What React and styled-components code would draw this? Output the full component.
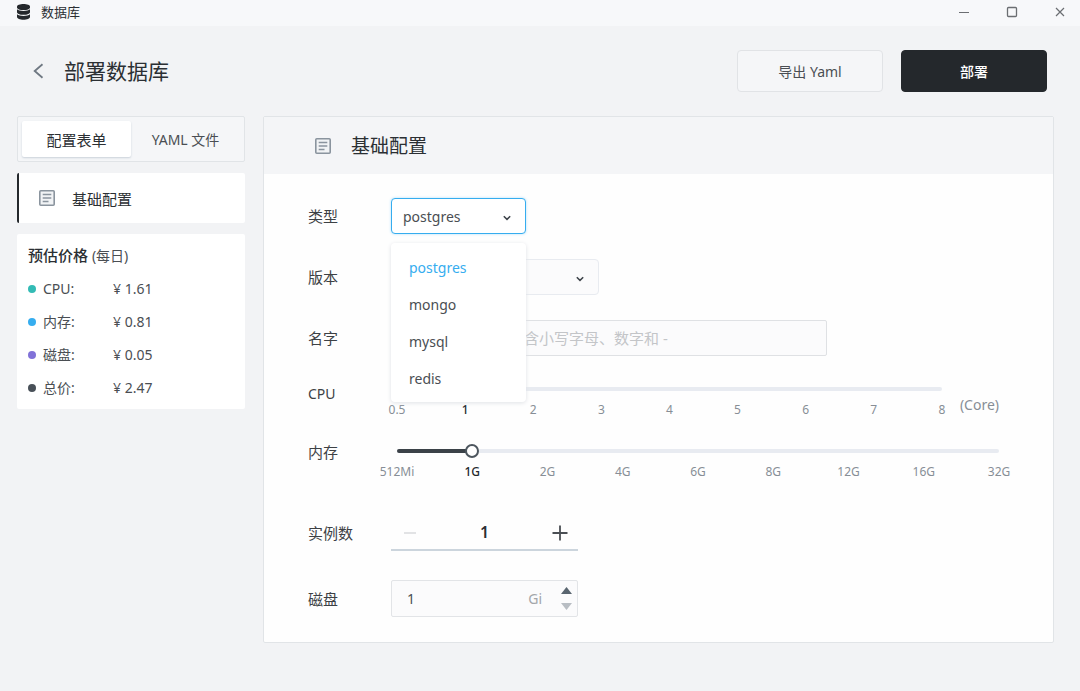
import React, { useState } from 'react';
import styled, { createGlobalStyle } from 'styled-components';

const GlobalStyle = createGlobalStyle`
  * {
    box-sizing: border-box;
  }

  body {
    margin: 0;
    background: #f2f3f5;
    color: #2b2f33;
    font-family: 'Noto Sans', 'Noto Sans CJK SC', sans-serif;
    font-size: 15px;
  }

  button, input, select {
    margin: 0;
    font: inherit;
    color: inherit;
  }

  button {
    cursor: pointer;
  }
`;

const TitleBar = styled.header`
  display: flex;
  align-items: center;
  justify-content: space-between;
  height: 26px;
  background: #f7f8fa;
`;

const AppName = styled.div`
  display: flex;
  align-items: center;
  gap: 10px;
  padding: 0 0 2px 16px;
  font-size: 13px;
  line-height: 24px;
`;

const WindowButtons = styled.div`
  display: flex;
  padding-bottom: 2px;
`;

const WindowButton = styled.button`
  display: flex;
  align-items: center;
  justify-content: center;
  width: 48px;
  height: 24px;
  padding: 0 0 0 8px;
  border: none;
  background: none;
  color: #6b6e72;
`;

const PageHeader = styled.div`
  display: flex;
  align-items: center;
  gap: 18px;
  padding: 24px 33px 24px 30px;
`;

const BackButton = styled.button`
  display: flex;
  padding: 0;
  border: none;
  background: none;
  color: #6f7882;
`;

const PageTitle = styled.h1`
  flex: 1;
  margin: 0;
  font-size: 21px;
  font-weight: 400;
  line-height: 30px;
`;

const ActionButton = styled.button`
  width: 146px;
  height: 42px;
  border: 1px solid ${(props) => (props.$primary ? '#24282c' : '#e1e3e6')};
  border-radius: 4px;
  background: ${(props) => (props.$primary ? '#24282c' : '#f5f6f8')};
  color: ${(props) => (props.$primary ? '#fff' : '#4a4e53')};
  font-size: 14px;
  font-weight: ${(props) => (props.$primary ? 500 : 400)};
`;

const Content = styled.main`
  display: flex;
  align-items: flex-start;
  gap: 18px;
  padding: 0 26px 24px 17px;
`;

const Sidebar = styled.aside`
  display: flex;
  flex-direction: column;
  flex: none;
  gap: 11px;
  width: 228px;
`;

const Tabs = styled.div`
  display: flex;
  height: 46px;
  padding: 4px;
  border: 1px solid #e1e4e7;
  border-radius: 2px;
  background: #f5f6f8;
`;

const Tab = styled.button`
  flex: 1;
  height: 36px;
  padding: 0;
  border: none;
  border-radius: 2px;
  background: ${(props) => (props.$active ? '#fff' : 'transparent')};
  box-shadow: ${(props) => (props.$active ? '0 1px 2px #c9d1da' : 'none')};
  color: ${(props) => (props.$active ? '#2b2f33' : '#4a4e53')};
  font-size: ${(props) => (props.$latin ? '14px' : '15px')};
`;

const NavItem = styled.a`
  display: flex;
  align-items: center;
  gap: 16px;
  height: 50px;
  padding-left: 19px;
  border-left: 2px solid #24282c;
  border-radius: 2px;
  background: #fff;
  color: inherit;
  text-decoration: none;
`;

const PriceCard = styled.section`
  padding: 5px 11px;
  border-radius: 2px;
  background: #fff;
`;

const PriceTitle = styled.h2`
  margin: 0;
  font-size: 15px;
  font-weight: 500;
  line-height: 33px;

  span {
    color: #4a4e53;
    font-size: 14px;
    font-weight: 400;
  }
`;

const PriceTable = styled.table`
  border-collapse: collapse;
  color: #4a4e53;
  font-size: 14px;

  th, td {
    height: 33px;
    padding: 0;
    font-weight: 400;
    text-align: left;
    line-height: 20px;
  }

  th {
    width: 85px;
  }
`;

const PriceName = styled.span`
  display: flex;
  align-items: center;
  gap: 7px;
`;

const Dot = styled.i`
  width: 8px;
  height: 8px;
  border-radius: 50%;
  background: ${(props) => props.$color};
`;

const Panel = styled.section`
  flex: 1;
  min-width: 0;
  border: 1px solid #e1e4e7;
  border-radius: 2px;
  background: #fefefe;
`;

const PanelHeader = styled.div`
  display: flex;
  align-items: center;
  gap: 19px;
  height: 57px;
  padding-left: 50px;
  background: #f4f5f7;
`;

const PanelTitle = styled.h2`
  margin: 0;
  font-size: 19px;
  font-weight: 400;
  line-height: 28px;
`;

const Form = styled.form`
  display: flex;
  flex-direction: column;
  gap: 25px;
  padding: 24px 54px 25px 44px;
`;

const Row = styled.div`
  display: flex;
  align-items: ${(props) => (props.$top ? 'flex-start' : 'center')};
  margin-top: ${(props) => props.$space || 0}px;
`;

const Label = styled.label`
  flex: none;
  width: 83px;
  color: #3d4145;
  font-size: ${(props) => (props.$latin ? '14px' : '15px')};
  line-height: ${(props) => props.$line || 36}px;
`;

const SelectBox = styled.div`
  display: grid;
  position: relative;
  align-items: center;
  width: ${(props) => props.$width}px;
  height: 36px;

  select, > svg {
    grid-area: 1 / 1;
  }

  > svg {
    justify-self: end;
    margin: 3px 14px 0 0;
    pointer-events: none;
  }
`;

const Select = styled.select`
  appearance: none;
  width: 100%;
  height: 100%;
  padding: 0 30px 0 11px;
  border: 1px solid ${(props) => (props.$open ? '#36adef' : '#e8ebf0')};
  border-radius: 4px;
  outline: none;
  background: ${(props) => (props.$open ? '#fff' : '#fbfbfc')};
  box-shadow: ${(props) => (props.$open ? '0 0 3px #b4e0fa' : 'none')};
  color: #4a4e53;
  font-size: 14px;
`;

const Menu = styled.ul`
  position: absolute;
  top: calc(100% + 9px);
  left: 0;
  z-index: 2;
  width: 100%;
  margin: 0;
  padding: 6px 0 5px;
  border-radius: 4px;
  background: #fff;
  box-shadow: 0 1px 4px #dfe2e6;
  list-style: none;
`;

const MenuItem = styled.button`
  display: block;
  width: 100%;
  height: 37px;
  padding: 0 18px;
  border: none;
  background: none;
  color: ${(props) => (props.$active ? '#36adef' : '#4a4e53')};
  font-size: 14px;
  text-align: left;
`;

const NameInput = styled.input`
  width: 436px;
  height: 36px;
  padding: 0 12px;
  border: 1px solid #dfe1e4;
  border-radius: 2px;
  outline: none;
  background: #fbfbfc;

  &::placeholder {
    color: #c3c5c8;
  }
`;

const SliderBox = styled.div`
  flex: 1;
  margin-left: 6px;
`;

const Track = styled.div`
  display: grid;
  align-items: center;
  height: 16px;

  > * {
    grid-area: 1 / 1;
  }
`;

const Rail = styled.div`
  height: 4px;
  border-radius: 2px;
  background: #e8ebf1;
`;

const Fill = styled.div`
  height: 4px;
  border-radius: 2px;
  background: #3b4248;
`;

const Range = styled.input`
  appearance: none;
  width: calc(100% + 14px);
  height: 16px;
  margin: 0 -7px;
  background: transparent;

  &::-webkit-slider-thumb {
    appearance: none;
    width: 14px;
    height: 14px;
    border: 2px solid #4d565e;
    border-radius: 50%;
    background: #fff;
  }
`;

const Ticks = styled.div`
  display: flex;
  justify-content: space-between;
  margin-top: 5px;
  font-size: 12px;
  line-height: 16px;
`;

const Tick = styled.span`
  display: flex;
  justify-content: center;
  width: 0;
  color: ${(props) => (props.$active ? '#24282c' : '#878e96')};
  font-weight: ${(props) => (props.$active ? 500 : 400)};
`;

const Unit = styled.span`
  align-self: flex-end;
  margin-left: 18px;
  color: #878e96;
  font-size: 14px;
  line-height: 26px;
`;

const Stepper = styled.div`
  display: flex;
  align-items: center;
  width: 187px;
  height: 36px;
  border-bottom: 2px solid #ccd5dd;
`;

const StepButton = styled.button`
  display: flex;
  align-items: center;
  justify-content: center;
  width: 37px;
  height: 34px;
  padding: 2px 0 0;
  border: none;
  background: none;
  color: #4a4e53;

  &:disabled {
    color: #e2e3e5;
  }
`;

const StepInput = styled.input`
  flex: 1;
  min-width: 0;
  border: none;
  outline: none;
  background: none;
  font-size: 16px;
  font-weight: 600;
  text-align: center;
`;

const DiskBox = styled.div`
  display: flex;
  align-items: center;
  width: 187px;
  height: 37px;
  padding: 0 5px 0 15px;
  border: 1px solid #e2e4e7;
  border-radius: 2px;
  background: #fbfbfc;
  color: #a3a6aa;
  font-size: 14px;

  input {
    flex: 1;
    min-width: 0;
    padding: 0;
    border: none;
    outline: none;
    background: none;
    color: #4a4e53;
  }
`;

const Arrows = styled.div`
  display: flex;
  flex-direction: column;
  gap: 2px;
  margin-left: 19px;
`;

const ArrowButton = styled.button`
  display: flex;
  align-items: center;
  height: 14px;
  padding: 0;
  border: none;
  background: none;
  color: ${(props) => (props.$muted ? '#b8bdc3' : '#59656f')};
`;

const DatabaseIcon = () => (
  <svg width="15" height="18" viewBox="0 0 15 18" fill="#24282c">
    <path d="M7.5 1C11 1 14 2 14 3.6v.8C14 6 11 7 7.5 7S1 6 1 4.400v-.8C1 2 4 1 7.500 1z" />
    <path d="M1 6.300C2.300 7.400 4.700 8 7.500 8s5.200-.6 6.500-1.700v2.900c0 1.500-3 2.600-6.500 2.600S1 10.700 1 9.200z" />
    <path d="M1 11.200c1.300 1.100 3.700 1.700 6.500 1.700s5.200-.6 6.500-1.700v2.900c0 1.600-3 2.700-6.500 2.700S1 15.700 1 14.100z" />
  </svg>
);

const FormIcon = () => (
  <svg width="18" height="18" viewBox="0 0 18 18" fill="none" stroke="#8a949e" strokeWidth="1.6">
    <rect x="1.800" y="1.800" width="14.400" height="14.400" rx="1" fill="#f1f3f5" />
    <path d="M4.700 5.500h8.600M4.700 9h8.600M4.700 12.500h5.800" strokeWidth="1.400" />
  </svg>
);

const Chevron = () => (
  <svg width="10" height="8" viewBox="0 0 10 8" fill="none" stroke="#3d4349" strokeWidth="1.500">
    <path d="M1.800 2.200 5 5.400l3.200-3.200" />
  </svg>
);

const prices = [
  { name: 'CPU', value: '1.61', color: '#33bbb5' },
  { name: '内存', value: '0.81', color: '#36adef' },
  { name: '磁盘', value: '0.05', color: '#8172d8' },
  { name: '总价', value: '2.47', color: '#485058' },
];

const dbTypes = ['postgres', 'mongo', 'mysql', 'redis'];
const cpuMarks = ['0.5', '1', '2', '3', '4', '5', '6', '7', '8'];
const memoryMarks = ['512Mi', '1G', '2G', '4G', '6G', '8G', '12G', '16G', '32G'];

const Slider = ({ id, marks, value, onChange }) => (
  <SliderBox>
    <Track>
      <Rail />
      <Fill style={{ width: `${(value / (marks.length - 1)) * 100}%` }} />
      <Range
        id={id}
        type="range"
        min="0"
        max={marks.length - 1}
        value={value}
        onChange={(e) => onChange(Number(e.target.value))}
      />
    </Track>
    <Ticks>
      {marks.map((mark, i) => (
        <Tick key={mark} $active={i === value}>{mark}</Tick>
      ))}
    </Ticks>
  </SliderBox>
);

const App = () => {
  const [tab, setTab] = useState('form');
  const [dbType, setDbType] = useState('postgres');
  const [menuOpen, setMenuOpen] = useState(true);
  const [name, setName] = useState('');
  const [cpu, setCpu] = useState(1);
  const [memory, setMemory] = useState(1);
  const [replicas, setReplicas] = useState(1);
  const [disk, setDisk] = useState(1);

  const handleSelect = (type) => {
    setDbType(type);
    setMenuOpen(false);
  };

  return (
    <>
      <GlobalStyle />
      <TitleBar>
        <AppName>
          <DatabaseIcon />
          数据库
        </AppName>
        <WindowButtons>
          <WindowButton aria-label="最小化">
            <svg width="12" height="12" viewBox="0 0 12 12" stroke="currentColor"><path d="M1 6.500h10" /></svg>
          </WindowButton>
          <WindowButton aria-label="最大化">
            <svg width="12" height="12" viewBox="0 0 12 12" fill="none" stroke="currentColor" strokeWidth="1.300"><rect x="1.500" y="1.500" width="9" height="9" rx="1" /></svg>
          </WindowButton>
          <WindowButton aria-label="关闭">
            <svg width="12" height="12" viewBox="0 0 12 12" stroke="currentColor" strokeWidth="1.200"><path d="M2 2l8 8M10 2l-8 8" /></svg>
          </WindowButton>
        </WindowButtons>
      </TitleBar>

      <PageHeader>
        <BackButton aria-label="返回">
          <svg width="16" height="18" viewBox="0 0 16 18" fill="none" stroke="currentColor" strokeWidth="1.800">
            <path d="M12.500 2.300 4.700 9l7.800 6.700" />
          </svg>
        </BackButton>
        <PageTitle>部署数据库</PageTitle>
        <ActionButton>导出 Yaml</ActionButton>
        <ActionButton $primary>部署</ActionButton>
      </PageHeader>

      <Content>
        <Sidebar>
          <Tabs>
            <Tab $active={tab === 'form'} onClick={() => setTab('form')}>配置表单</Tab>
            <Tab $latin $active={tab === 'yaml'} onClick={() => setTab('yaml')}>YAML 文件</Tab>
          </Tabs>
          <NavItem href="#base">
            <FormIcon />
            基础配置
          </NavItem>
          <PriceCard>
            <PriceTitle>预估价格 <span>(每日)</span></PriceTitle>
            <PriceTable>
              <tbody>
                {prices.map((price) => (
                  <tr key={price.name}>
                    <th scope="row">
                      <PriceName><Dot $color={price.color} />{price.name}:</PriceName>
                    </th>
                    <td>¥ {price.value}</td>
                  </tr>
                ))}
              </tbody>
            </PriceTable>
          </PriceCard>
        </Sidebar>

        <Panel id="base">
          <PanelHeader>
            <FormIcon />
            <PanelTitle>基础配置</PanelTitle>
          </PanelHeader>
          <Form onSubmit={(e) => e.preventDefault()}>
            <Row>
              <Label htmlFor="type">类型</Label>
              <SelectBox $width={135}>
                <Select
                  id="type"
                  value={dbType}
                  $open={menuOpen}
                  onMouseDown={(e) => {
                    e.preventDefault();
                    setMenuOpen(!menuOpen);
                  }}
                  onChange={(e) => handleSelect(e.target.value)}
                >
                  {dbTypes.map((type) => <option key={type}>{type}</option>)}
                </Select>
                <Chevron />
                {menuOpen && (
                  <Menu>
                    {dbTypes.map((type) => (
                      <li key={type}>
                        <MenuItem type="button" $active={type === dbType} onClick={() => handleSelect(type)}>
                          {type}
                        </MenuItem>
                      </li>
                    ))}
                  </Menu>
                )}
              </SelectBox>
            </Row>
            <Row>
              <Label htmlFor="version">版本</Label>
              <SelectBox $width={208}>
                <Select id="version">
                  <option>14.8.0</option>
                </Select>
                <Chevron />
              </SelectBox>
            </Row>
            <Row>
              <Label htmlFor="name">名字</Label>
              <NameInput
                id="name"
                value={name}
                placeholder="字母开头，仅能包含小写字母、数字和 -"
                onChange={(e) => setName(e.target.value)}
              />
            </Row>
            <Row $top>
              <Label htmlFor="cpu" $latin $line={26}>CPU</Label>
              <Slider id="cpu" marks={cpuMarks} value={cpu} onChange={setCpu} />
              <Unit>(Core)</Unit>
            </Row>
            <Row $top>
              <Label htmlFor="memory" $line={18}>内存</Label>
              <Slider id="memory" marks={memoryMarks} value={memory} onChange={setMemory} />
            </Row>
            <Row $space={10}>
              <Label htmlFor="replicas">实例数</Label>
              <Stepper>
                <StepButton type="button" aria-label="减少" disabled={replicas <= 1} onClick={() => setReplicas(replicas - 1)}>
                  <svg width="16" height="16" viewBox="0 0 16 16" stroke="currentColor" strokeWidth="2"><path d="M2 8h12" /></svg>
                </StepButton>
                <StepInput
                  id="replicas"
                  inputMode="numeric"
                  value={replicas}
                  onChange={(e) => setReplicas(Number(e.target.value) || 1)}
                />
                <StepButton type="button" aria-label="增加" onClick={() => setReplicas(replicas + 1)}>
                  <svg width="16" height="16" viewBox="0 0 16 16" stroke="currentColor" strokeWidth="1.800"><path d="M.5 8h15M8 .5v15" /></svg>
                </StepButton>
              </Stepper>
            </Row>
            <Row $space={4}>
              <Label htmlFor="disk">磁盘</Label>
              <DiskBox>
                <input
                  id="disk"
                  inputMode="numeric"
                  value={disk}
                  onChange={(e) => setDisk(Number(e.target.value) || 1)}
                />
                Gi
                <Arrows>
                  <ArrowButton type="button" aria-label="增加磁盘" onClick={() => setDisk(disk + 1)}>
                    <svg width="11" height="7" viewBox="0 0 11 7" fill="currentColor"><path d="M5.500 0 11 7H0z" /></svg>
                  </ArrowButton>
                  <ArrowButton type="button" aria-label="减少磁盘" $muted={disk <= 1} onClick={() => setDisk(Math.max(1, disk - 1))}>
                    <svg width="11" height="7" viewBox="0 0 11 7" fill="currentColor"><path d="M5.500 7 0 0h11z" /></svg>
                  </ArrowButton>
                </Arrows>
              </DiskBox>
            </Row>
          </Form>
        </Panel>
      </Content>
    </>
  );
};

export default App;
